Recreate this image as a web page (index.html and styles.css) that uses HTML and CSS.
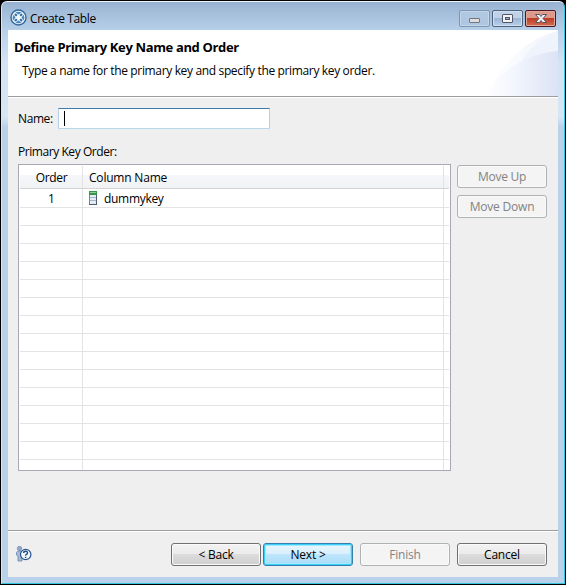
FILE: index.html
```
<!DOCTYPE html>
<html lang="en">
<head>
<meta charset="utf-8">
<title>Create Table</title>
<link rel="stylesheet" href="styles.css">
</head>
<body>
<div class="window">
  <header class="titlebar">
    <svg class="app-icon" width="17" height="17" viewBox="0 0 17 17">
      <circle cx="8.5" cy="8.500" r="7.500" fill="#f1f7fb" stroke="#34699f" stroke-width="1.400"/>
      <path d="M5.500 3.500Q8.500 1.800 11.500 3.500L8.500 5.500zM5.500 13.500Q8.500 15.200 11.500 13.500L8.500 11.500zM3.500 5.500Q1.800 8.500 3.500 11.500L5.500 8.500zM13.500 5.500Q15.200 8.500 13.500 11.500L11.500 8.500z" fill="#4b86bd"/>
      <path d="M5 5l1.800 1.800M12 5l-1.800 1.800M5 12l1.800-1.800M12 12l-1.800-1.800" stroke="#2f6ba5" stroke-width="2"/>
    </svg>
    <span class="caption">Create Table</span>
    <div class="controls">
      <span class="ctl min"><svg width="29" height="15"><rect x="9.500" y="7.500" width="10" height="4" rx=".5" fill="#dedede" stroke="#73777d"/></svg></span>
      <span class="ctl max"><svg width="29" height="15"><rect x="9.500" y="3.500" width="10" height="8" rx=".5" fill="#f4f4f4" stroke="#535666"/><rect x="12.500" y="6.500" width="4" height="2" fill="#8cb0d6" stroke="#535666"/></svg></span>
      <span class="ctl close"><svg width="29" height="15"><path d="M9.500 3.500h4l1.500 2 1.500-2h4l-3.500 4 3.500 4h-4l-1.500-2-1.500 2h-4l3.500-4z" fill="#f3f3f5" stroke="#545463"/></svg></span>
    </div>
  </header>
  <main class="dialog">
    <section class="banner">
      <svg class="swoosh" width="90" height="66" viewBox="0 0 90 66">
        <defs>
          <linearGradient id="a"><stop offset="0" stop-color="#fff"/><stop offset="1" stop-color="#f1f4fc"/></linearGradient>
          <linearGradient id="b"><stop offset="0" stop-color="#fff"/><stop offset=".4" stop-color="#f3f6fd"/><stop offset="1" stop-color="#dce3f6"/></linearGradient>
        </defs>
        <path d="M18 66C32 40 52 10 90 1V66Z" fill="url(#a)"/>
        <path d="M52 34Q64 12 90 1V22Q70 24 52 34Z" fill="#eff3fc"/>
        <path d="M16 66C30 42 58 23 90 21V66Z" fill="url(#b)"/>
      </svg>
      <h1><span class="t-title">Define Primary Key Name and Order</span></h1>
      <p><span class="t-sub">Type a name for the primary key and specify the primary key order.</span></p>
    </section>
    <section class="body">
      <div class="name-row"><label class="t-name">Name:</label><div class="field"><i class="caret"></i></div></div>
      <div class="list-label"><span class="t-pko">Primary Key Order:</span></div>
      <div class="list-area">
        <div class="table">
          <div class="row head"><span class="c1"><span class="t-order">Order</span></span><span class="c2"><span class="t-col">Column Name</span></span><span class="c3"></span></div>
          <div class="row first"><span class="c1">1</span><span class="c2"><svg class="col-icon" width="8" height="14"><rect x=".5" y=".5" width="7" height="13" fill="#e4ecf5" stroke="#75849a"/><rect width="8" height="4" fill="#38964b"/><path d="M1 1.500h6" stroke="#8bd094"/><path d="M1 6.500h6M1 9.500h6" stroke="#a6b5c8"/><path d="M7.500 4v10M0 13.500h8" stroke="#4a5a73"/></svg><span class="t-dummy">dummykey</span></span><span class="c3"></span></div>
          <div class="row"><span class="c1"></span><span class="c2"></span><span class="c3"></span></div>
          <div class="row"><span class="c1"></span><span class="c2"></span><span class="c3"></span></div>
          <div class="row"><span class="c1"></span><span class="c2"></span><span class="c3"></span></div>
          <div class="row"><span class="c1"></span><span class="c2"></span><span class="c3"></span></div>
          <div class="row"><span class="c1"></span><span class="c2"></span><span class="c3"></span></div>
          <div class="row"><span class="c1"></span><span class="c2"></span><span class="c3"></span></div>
          <div class="row"><span class="c1"></span><span class="c2"></span><span class="c3"></span></div>
          <div class="row"><span class="c1"></span><span class="c2"></span><span class="c3"></span></div>
          <div class="row"><span class="c1"></span><span class="c2"></span><span class="c3"></span></div>
          <div class="row"><span class="c1"></span><span class="c2"></span><span class="c3"></span></div>
          <div class="row"><span class="c1"></span><span class="c2"></span><span class="c3"></span></div>
          <div class="row"><span class="c1"></span><span class="c2"></span><span class="c3"></span></div>
          <div class="row"><span class="c1"></span><span class="c2"></span><span class="c3"></span></div>
          <div class="row"><span class="c1"></span><span class="c2"></span><span class="c3"></span></div>
          <div class="row last"><span class="c1"></span><span class="c2"></span><span class="c3"></span></div>
        </div>
        <div class="side">
          <div class="btn off"><span class="t-up">Move Up</span></div>
          <div class="btn off"><span class="t-down">Move Down</span></div>
        </div>
      </div>
    </section>
    <footer class="footer">
      <svg class="help" width="16" height="16" viewBox="0 0 16 16">
        <circle cx="3.500" cy="2.500" r="2.200" fill="#8fa9c9" stroke="#6482ac" stroke-width=".6"/>
        <path d="M.5 6.500Q1 5 3 5h2l1 2v8H2V10L.5 9z" fill="#a9bdd6" stroke="#6d8bb4" stroke-width=".9"/>
        <circle cx="9.700" cy="8.500" r="5.200" fill="#f3f8fc" stroke="#28558d" stroke-width="1.200"/>
        <path d="M7.700 7Q7.700 5.300 9.600 5.300T11.500 6.900Q11.500 7.800 10.500 8.300T9.600 9.600M9.600 10.700v1.300" fill="none" stroke="#1f4a85" stroke-width="1.400"/>
      </svg>
      <div class="btn back"><span class="t-back">&lt; Back</span></div>
      <div class="btn next"><span class="t-next">Next &gt;</span></div>
      <div class="btn off finish"><span class="t-finish">Finish</span></div>
      <div class="btn cancel"><span class="t-cancel">Cancel</span></div>
    </footer>
  </main>
</div>
</body>
</html>
```
FILE: styles.css
```
* { box-sizing: border-box; }
body { margin: 0; padding-top: 1px; height: 585px; background: #000; font: 12px/16px "Open Sans", "Noto Sans", sans-serif; color: #000; }
svg { display: block; flex: none; }
span { white-space: nowrap; }
.window {
  width: 564px; height: 583px; margin-left: 1px; padding: 0 6px 6px;
  border: 1px solid #35c5df; border-left-color: #d9e6f3; border-top-color: #f2f5f8;
  border-radius: 6px 6px 0 0;
  background: linear-gradient(#98b3d2, #b9d1ea 30px, #d2e3f4 60px, #d7e6f5 115px, #b9d1ea 125px);
}
.titlebar { height: 28px; display: flex; align-items: flex-start; padding-left: 2px; }
.app-icon { margin-top: 7px; }
.caption { margin: 9px 0 0 3px; letter-spacing: -.38px; }
.controls { display: flex; gap: 2px; margin: 8px 2px 0 auto; }
.ctl { width: 31px; height: 17px; border: 1px solid #50627c; border-radius: 2px; box-shadow: inset 0 0 0 1px #cfe0f1; background: linear-gradient(#bfd2e8 50%, #9bb7d6 50%, #b8d0e9); }
.min { border-color: #7d94b2; background: linear-gradient(#b1c8e1, #adc6e1); box-shadow: inset 0 0 0 1px #c4d6ea; }
.close { border-color: #4d1525; box-shadow: inset 0 0 0 1px #e3a799; background: linear-gradient(#dc9a8c 45%, #bd3c27 50%, #d26e4e); }
.dialog { width: 550px; height: 547px; background: #efefef; display: flex; flex-direction: column; }
.banner { height: 68px; background: #fff; border-bottom: 1px solid #fff; position: relative; box-shadow: inset 0 -1px #9d9d9d; padding: 9px 0 0 6px; }
.swoosh { position: absolute; right: 0; top: 0; }
.banner h1 { margin: 0; font-size: 13px; line-height: 17px; font-weight: 700; }
.banner p { margin: 7px 0 0 8px; }
.body { height: 432px; padding: 10px 10px 0; }
.name-row { display: flex; height: 21px; align-items: center; }
.name-row label { width: 40px; white-space: nowrap; }
.field { width: 212px; height: 21px; border: 1px solid #b5cfe7; border-top-color: #3d7bad; border-bottom-color: #b7d9ed; border-radius: 1px; background: #fff; padding: 2px 5px; }
.caret { display: block; width: 1px; height: 15px; background: #000; }
.list-label { margin-top: 15px; height: 20px; }
.list-area { display: flex; gap: 6px; }
.table { width: 433px; height: 307px; border: 1px solid #a8a9b2; background: #fff; padding: 1px; }
.row { display: flex; height: 18px; border-bottom: 1px solid #e3e3e3; }
.c1 { width: 63px; border-right: 1px solid #e3e3e3; text-align: center; padding-left: 1px; }
.c2 { width: 361px; border-right: 1px solid #e3e3e3; display: flex; padding-left: 6px; }
.head { height: 23px; line-height: 23px; border-bottom-color: #d5d5d5; background: linear-gradient(#fff 9px, #f6f7fa 9px, #f0f2f4); }
.head .c3 { width: 5px; }
.first { height: 19px; line-height: 20px; }
.last { height: 10px; border: 0; }
.col-icon { margin: 2px 7px 0 0; }
.side { display: flex; flex-direction: column; gap: 7px; padding-top: 1px; }
.btn { width: 90px; height: 23px; border: 1px solid #707070; border-radius: 3px; box-shadow: inset 0 0 0 1px #fafafa; background: linear-gradient(#f2f2f2, #ebebeb 50%, #dcdcdc 50%, #cfcfcf); display: flex; align-items: center; justify-content: center; line-height: 20px; }
.off { color: #838383; border-color: #adb2b5; background: #f4f4f4; }
.footer { height: 47px; border-top: 1px solid #9d9d9d; box-shadow: inset 0 1px #fff; padding: 12px 11px 0 8px; display: flex; }
.help { margin: 3px 139px 0 0; }
.next { margin: 0 7px 0 2px; border-color: #347fac; box-shadow: inset 0 0 0 1px #36d0fa, inset 0 0 0 2px #a5e8fd; background: linear-gradient(#eaf6fd, #d7effc 50%, #bee6fd 50%, #a9dbf5); }
.cancel { margin-left: 7px; }
.t-title { letter-spacing: -.36px; }
.t-sub { letter-spacing: -.35px; }
.t-name { letter-spacing: -.4px; }
.t-pko { letter-spacing: -.44px; }
.t-order, .t-dummy { letter-spacing: -.3px; }
.t-col, .t-down, .t-next, .t-cancel { letter-spacing: -.2px; }
.t-up, .t-back { letter-spacing: -.25px; }
.t-finish { letter-spacing: -.2px; }
```
